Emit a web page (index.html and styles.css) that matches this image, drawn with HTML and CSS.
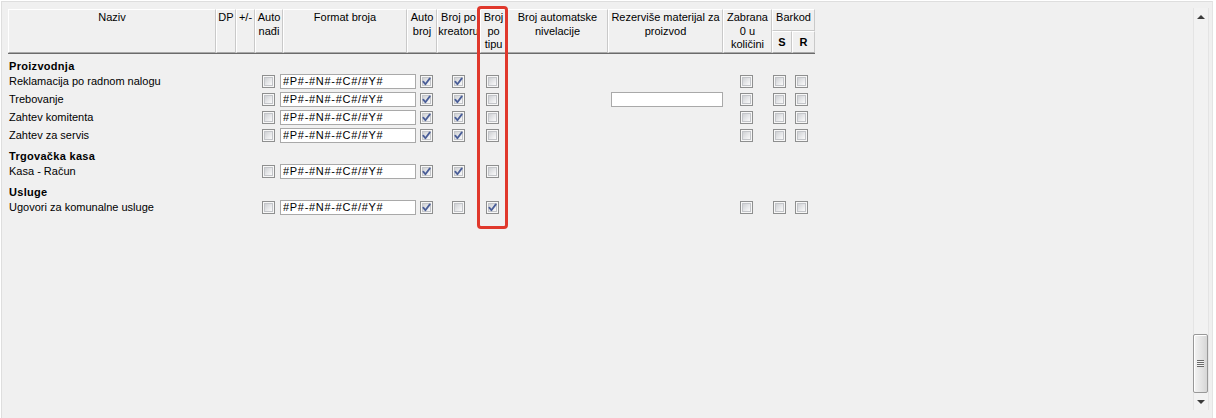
FILE: index.html
```html
<!DOCTYPE html>
<html lang="sr">
<head>
    <meta charset="UTF-8">
    <title>Numeracija dokumenata</title>
    <link rel="stylesheet" href="styles.css">
</head>
<body>
    <div class="window">
        <div class="grid-area">
            <div class="header">
                <div class="hcell c-naziv">Naziv</div>
                <div class="hcell c-dp">DP</div>
                <div class="hcell c-pm">+/-</div>
                <div class="hcell c-nadji">Auto<br>nađi</div>
                <div class="hcell c-format">Format broja</div>
                <div class="hcell c-autobroj">Auto<br>broj</div>
                <div class="hcell c-kreator">Broj po<br>kreatoru</div>
                <div class="hcell c-tip">Broj<br>po<br>tipu</div>
                <div class="hcell c-nivel">Broj automatske<br>nivelacije</div>
                <div class="hcell c-rez">Rezerviše materijal za<br>proizvod</div>
                <div class="hcell c-zab">Zabrana<br>0 u<br>količini</div>
                <div class="hgroup c-barkod">
                    <div class="hcell barkod-top">Barkod</div>
                    <div class="hsub">
                        <div class="hcell c-s">S</div>
                        <div class="hcell c-r">R</div>
                    </div>
                </div>
            </div>

            <div class="rows">
                <div class="group">Proizvodnja</div>
                <div class="row">
                    <span class="name">Reklamacija po radnom nalogu</span>
                    <span class="cb"></span>
                    <input class="field" value="#P#-#N#-#C#/#Y#" readonly>
                    <span class="cb on"><svg viewBox="0 0 11 11"><path d="M2.3 5.6 L4.4 8.2 L8.8 2.4"/></svg></span>
                    <span class="cb on"><svg viewBox="0 0 11 11"><path d="M2.3 5.6 L4.4 8.2 L8.8 2.4"/></svg></span>
                    <span class="cb"></span>
                    <span></span>
                    <span class="cb"></span>
                    <span class="cb"></span>
                    <span class="cb"></span>
                </div>
                <div class="row">
                    <span class="name">Trebovanje</span>
                    <span class="cb"></span>
                    <input class="field" value="#P#-#N#-#C#/#Y#" readonly>
                    <span class="cb on"><svg viewBox="0 0 11 11"><path d="M2.3 5.6 L4.4 8.2 L8.8 2.4"/></svg></span>
                    <span class="cb on"><svg viewBox="0 0 11 11"><path d="M2.3 5.6 L4.4 8.2 L8.8 2.4"/></svg></span>
                    <span class="cb"></span>
                    <input class="field wide" value="" readonly>
                    <span class="cb"></span>
                    <span class="cb"></span>
                    <span class="cb"></span>
                </div>
                <div class="row">
                    <span class="name">Zahtev komitenta</span>
                    <span class="cb"></span>
                    <input class="field" value="#P#-#N#-#C#/#Y#" readonly>
                    <span class="cb on"><svg viewBox="0 0 11 11"><path d="M2.3 5.6 L4.4 8.2 L8.8 2.4"/></svg></span>
                    <span class="cb on"><svg viewBox="0 0 11 11"><path d="M2.3 5.6 L4.4 8.2 L8.8 2.4"/></svg></span>
                    <span class="cb"></span>
                    <span></span>
                    <span class="cb"></span>
                    <span class="cb"></span>
                    <span class="cb"></span>
                </div>
                <div class="row">
                    <span class="name">Zahtev za servis</span>
                    <span class="cb"></span>
                    <input class="field" value="#P#-#N#-#C#/#Y#" readonly>
                    <span class="cb on"><svg viewBox="0 0 11 11"><path d="M2.3 5.6 L4.4 8.2 L8.8 2.4"/></svg></span>
                    <span class="cb on"><svg viewBox="0 0 11 11"><path d="M2.3 5.6 L4.4 8.2 L8.8 2.4"/></svg></span>
                    <span class="cb"></span>
                    <span></span>
                    <span class="cb"></span>
                    <span class="cb"></span>
                    <span class="cb"></span>
                </div>

                <div class="group">Trgovačka kasa</div>
                <div class="row">
                    <span class="name">Kasa - Račun</span>
                    <span class="cb"></span>
                    <input class="field" value="#P#-#N#-#C#/#Y#" readonly>
                    <span class="cb on"><svg viewBox="0 0 11 11"><path d="M2.3 5.6 L4.4 8.2 L8.8 2.4"/></svg></span>
                    <span class="cb on"><svg viewBox="0 0 11 11"><path d="M2.3 5.6 L4.4 8.2 L8.8 2.4"/></svg></span>
                    <span class="cb"></span>
                    <span></span>
                    <span></span>
                    <span></span>
                    <span></span>
                </div>

                <div class="group">Usluge</div>
                <div class="row">
                    <span class="name">Ugovori za komunalne usluge</span>
                    <span class="cb"></span>
                    <input class="field" value="#P#-#N#-#C#/#Y#" readonly>
                    <span class="cb on"><svg viewBox="0 0 11 11"><path d="M2.3 5.6 L4.4 8.2 L8.8 2.4"/></svg></span>
                    <span class="cb"></span>
                    <span class="cb on"><svg viewBox="0 0 11 11"><path d="M2.3 5.6 L4.4 8.2 L8.8 2.4"/></svg></span>
                    <span></span>
                    <span class="cb"></span>
                    <span class="cb"></span>
                    <span class="cb"></span>
                </div>
            </div>

            <!-- oznaka kolone "Broj po tipu" -->
            <div class="highlight"></div>
        </div>

        <div class="scrollbar">
            <div class="sb-btn"><span class="arrow up"></span></div>
            <div class="thumb"><span class="grip"></span></div>
            <div class="sb-btn"><span class="arrow down"></span></div>
        </div>
    </div>
</body>
</html>
```

FILE: styles.css
```css
html, body {
    margin: 0;
    height: 100%;
}
body {
    background: #fff;
    font-family: Tahoma, "Liberation Sans", Arial, sans-serif;
    font-size: 11px;
    color: #000;
}
.window {
    box-sizing: border-box;
    width: 1212px;
    height: 417px;
    margin: 1px 0 0 1px;
    padding: 7px 3px 0 6px;
    background: #f0f0f0;
    border-top: 1px solid #dedede;
    border-left: 1px solid #dedede;
    border-right: 1px solid #e4e4e4;
    display: flex;
    align-items: flex-start;
}
.grid-area {
    position: relative;
    flex: 1;
}

/* header */
.header {
    display: flex;
    width: 807px;
    height: 45px;
    box-sizing: border-box;
    border-bottom: 1px solid #6b6b6b;
}
.hcell {
    box-sizing: border-box;
    height: 100%;
    padding-top: 1px;
    border-top: 1px solid #fff;
    border-left: 1px solid #fff;
    border-right: 1px solid #c9c9c9;
    border-bottom: 1px solid #a9a9a9;
    text-align: center;
    line-height: 13.5px;
    white-space: nowrap;
    overflow: hidden;
}
.c-naziv { width: 208px; }
.c-dp { width: 20px; }
.c-pm { width: 19px; }
.c-nadji { width: 28px; }
.c-format { width: 124px; }
.c-autobroj { width: 30px; }
.c-kreator { width: 43px; }
.c-tip { width: 27px; }
.c-nivel { width: 101px; }
.c-rez { width: 115px; }
.c-zab { width: 49px; }
.c-barkod { width: 43px; }
.hgroup {
    display: flex;
    flex-direction: column;
}
.barkod-top {
    height: 22px;
    border-bottom-color: #c9c9c9;
}
.hsub {
    display: flex;
    height: 22px;
}
.c-s, .c-r {
    font-weight: bold;
    padding-top: 4px;
}
.c-s { width: 20px; }
.c-r { width: 23px; }

/* rows */
.group {
    height: 18px;
    box-sizing: border-box;
    padding: 5px 0 0 1px;
    line-height: 14px;
    font-weight: bold;
    letter-spacing: 0.3px;
}
.row {
    display: grid;
    grid-template-columns: 254px 18px 140px 32px 34px 125px 129px 33px 22px 20px;
    align-items: center;
    height: 18px;
}
.name {
    padding-left: 1px;
    white-space: nowrap;
}
.field {
    box-sizing: border-box;
    width: 136px;
    height: 15px;
    margin: 0;
    padding: 0 2px;
    border: 1px solid #a9a9a9;
    background: #fff;
    font-family: inherit;
    font-size: 11px;
    letter-spacing: 0.7px;
    color: #000;
    outline: none;
}
.field.wide {
    width: 112px;
}

/* checkbox */
.cb {
    position: relative;
    box-sizing: border-box;
    width: 13px;
    height: 13px;
    border: 1px solid #8e8f8f;
    background: #f7f7f7;
}
.cb::before {
    content: "";
    position: absolute;
    top: 1px;
    left: 1px;
    right: 1px;
    bottom: 1px;
    border: 1px solid #c3c5c9;
    background: linear-gradient(135deg, #cfd1d4 0%, #e7e8ea 55%, #fafafa 100%);
}
.cb svg {
    position: absolute;
    top: 0;
    left: 0;
    width: 11px;
    height: 11px;
}
.cb svg path {
    fill: none;
    stroke: #4a5e98;
    stroke-width: 1.8;
    stroke-linecap: round;
    stroke-linejoin: round;
}

.highlight {
    position: absolute;
    left: 469px;
    top: -3px;
    width: 31px;
    height: 223px;
    box-sizing: border-box;
    border: 3px solid #e0382c;
    border-radius: 4px;
}

/* scrollbar */
.scrollbar {
    box-sizing: border-box;
    width: 16px;
    height: 402px;
    margin-top: -1px;
    background: #f2f2f2;
    border-left: 1px solid #e4e4e4;
    border-right: 1px solid #e4e4e4;
    display: flex;
    flex-direction: column;
}
.sb-btn {
    height: 17px;
    display: flex;
    align-items: center;
    justify-content: center;
}
.arrow {
    width: 0;
    height: 0;
    border-left: 4px solid transparent;
    border-right: 4px solid transparent;
}
.arrow.up {
    border-bottom: 4px solid #3c3c3c;
}
.arrow.down {
    border-top: 4px solid #3c3c3c;
}
.thumb {
    margin-top: auto;
    margin-left: -1px;
    box-sizing: border-box;
    width: 15px;
    height: 59px;
    border: 1px solid #989898;
    border-radius: 2px;
    background: linear-gradient(to right, #f4f4f4, #e3e3e3 60%, #d6d6d6);
    box-shadow: inset 1px 1px 0 #fff;
    display: flex;
    align-items: center;
    justify-content: center;
}
.grip {
    width: 7px;
    height: 7px;
    background: repeating-linear-gradient(to bottom, #6a6a6a 0, #6a6a6a 1px, #f4f4f4 1px, #f4f4f4 2px);
}
```
